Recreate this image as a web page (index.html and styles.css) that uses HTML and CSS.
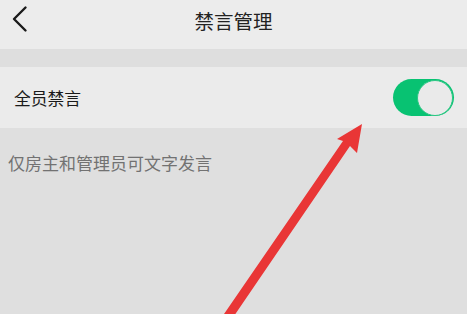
FILE: index.html
```html
<!DOCTYPE html>
<html lang="zh">
<head>
<meta charset="utf-8">
<link rel="stylesheet" href="styles.css">
</head>
<body>
<div class="page">
  <header class="nav">
    <svg class="back" width="18" height="28" viewBox="0 0 18 28"><path d="M14.5 2.5 L3 14 L14.5 25.5" fill="none" stroke="#1a1a1a" stroke-width="2.4" stroke-linecap="round" stroke-linejoin="round"/></svg>
    <div class="title">禁言管理</div>
  </header>
  <div class="gap"></div>
  <div class="row">
    <span class="label">全员禁言</span>
    <div class="switch"><div class="knob"></div></div>
  </div>
  <div class="hint">仅房主和管理员可文字发言</div>
  <svg class="arrow" width="467" height="314" viewBox="0 0 467 314">
    <polygon points="362,124 357,153 350,146 234,316 224,314 343,141 337,139" fill="#e93636"/>
  </svg>
</div>
</body>
</html>
```
FILE: styles.css
```css
* { box-sizing: border-box; }
html, body { margin: 0; padding: 0; }
body {
  width: 467px;
  height: 314px;
  overflow: hidden;
  background: #dfdfdf;
  font-family: "Noto Sans CJK SC", "Noto Sans", sans-serif;
}
.page { position: relative; width: 467px; height: 314px; }
.nav {
  position: relative;
  height: 49px;
  background: #ececec;
  display: flex;
  align-items: center;
  justify-content: center;
}
.back { position: absolute; left: 11px; top: 5px; }
.title { font-size: 19.5px; color: #222; line-height: 1; margin-top: -7px; }
.gap { height: 18px; background: #dedede; }
.row {
  height: 61px;
  background: #ebebeb;
  display: flex;
  align-items: center;
  justify-content: space-between;
  padding: 0 13px 0 14px;
}
.label { font-size: 16.8px; color: #1a1a1a; }
.switch {
  width: 61px;
  height: 37px;
  border-radius: 19px;
  background: #08c272;
  display: flex;
  justify-content: flex-end;
  align-items: center;
  padding-right: 1px;
}
.knob {
  width: 36px;
  height: 36px;
  border-radius: 50%;
  background: #eaeaea;
  border: 1px solid #2bc784;
}
.hint {
  padding: 22px 0 0 8px;
  font-size: 17px;
  color: #727272;
}
.arrow { position: absolute; left: 0; top: 0; }
```
